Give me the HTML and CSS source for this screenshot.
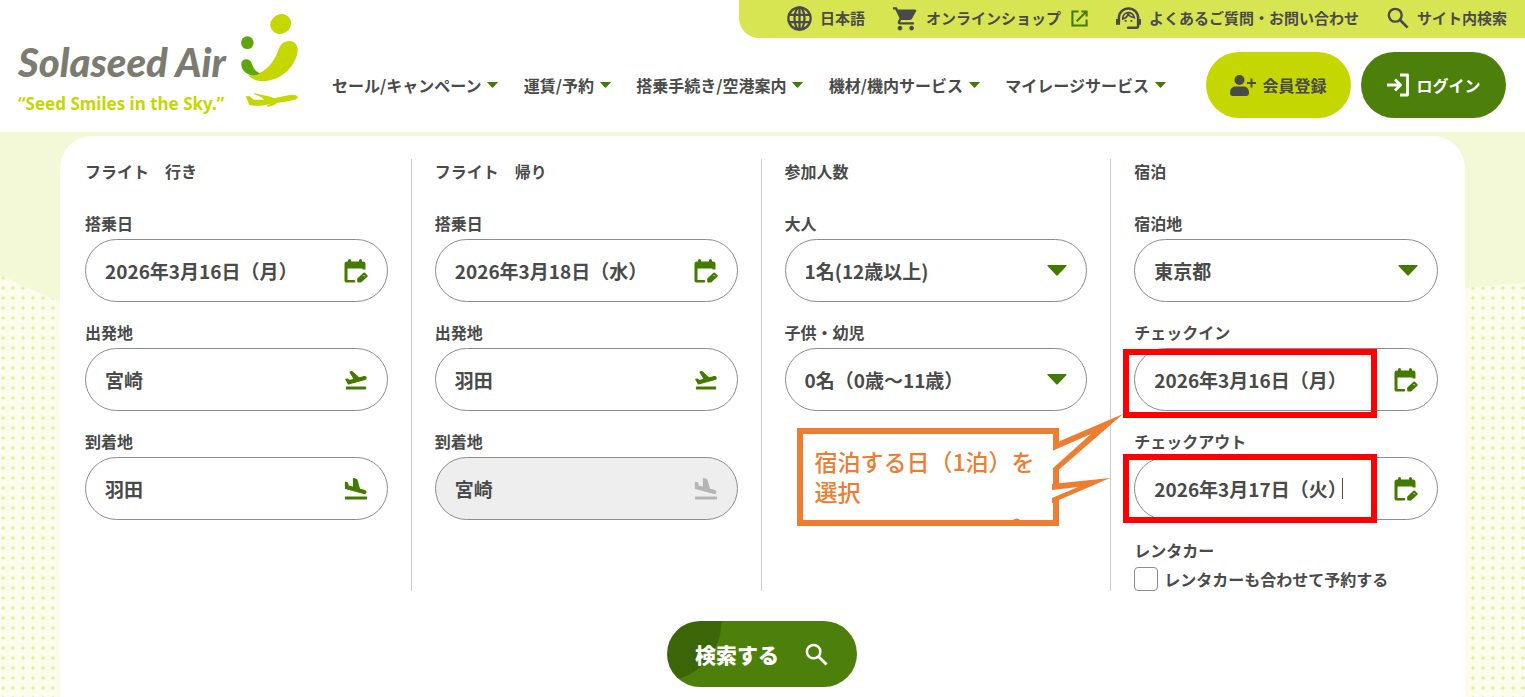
FILE: index.html
```
<!DOCTYPE html>
<html lang="ja">
<head>
  <meta charset="UTF-8">
  <meta name="viewport" content="width=device-width, initial-scale=1">
  <title>Solaseed Air</title>
  <link rel="stylesheet" href="styles.css">
</head>
<body>

<!-- shared icons -->
<svg class="sprite" aria-hidden="true">
  <symbol id="search" viewBox="0 0 24 24">
    <circle cx="9" cy="9" r="7" fill="none" stroke="currentColor" stroke-width="2.6"/>
    <path d="M14 14L22.500 22.500" stroke="currentColor" stroke-width="3"/>
  </symbol>
  <symbol id="calendar" viewBox="0 0 24 24">
    <path d="M5.500 1.500v3M16.500 1.500v3" stroke="currentColor" stroke-width="3" stroke-linecap="round"/>
    <path d="M3 2.500h16a2.500 2.500 0 0 1 2.500 2.500V10.500l-3 0V9.500H3.500v11.500H10a1.200 1.200 0 0 1 0 2.600H3A2.500 2.500 0 0 1 .5 21V5A2.500 2.500 0 0 1 3 2.500z" fill="currentColor"/>
    <path d="M14.200 22.500v-2.500l6-5.500 2.500 2.500-6 5.500z" fill="currentColor" stroke="currentColor" stroke-width="2" stroke-linejoin="round"/>
    <path d="M19.500 16l1.300 1.300" stroke="#fff" stroke-width="1"/>
  </symbol>
  <symbol id="takeoff" viewBox="0 0 24 24">
    <path d="M2.500 19H21.500v2H2.500zM22.070 9.640c-.21-.8-1.040-1.280-1.840-1.060L14.920 10l-6.900-6.430-1.930.51 4.140 7.170-4.970 1.330-1.970-1.540-1.450.39 2.590 4.490L21 11.490c.81-.23 1.280-1.050 1.070-1.850z" fill="currentColor" stroke="currentColor" stroke-width="1.200" stroke-linejoin="round"/>
  </symbol>
  <symbol id="landing" viewBox="0 0 24 24">
    <path d="M1.500 20h21v2h-21zM20 16.500c.8.210 1.620-.26 1.840-1.060.21-.8-.26-1.620-1.060-1.840l-5.310-1.620-2.760-9.520L9.500 1.500v8.800L4.400 9l-.93-3.200-2-.6v6.300l18.530 5z" fill="currentColor" stroke="currentColor" stroke-width="1.200" stroke-linejoin="round"/>
  </symbol>
  <symbol id="down" viewBox="0 0 20 11">
    <path d="M1 0h18q1 0 .5 1L11 10q-1 1-2 0L.5 1Q0 0 1 0z" fill="currentColor"/>
  </symbol>
</svg>

<header class="header">
  <a class="logo" href="#">
    <span class="logo-text">
      <span class="logo-name">Solaseed Air</span>
      <span class="logo-copy">“Seed Smiles in the Sky.”</span>
    </span>
    <svg class="logo-mark" viewBox="714 36 186 294" aria-hidden="true">
      <g fill="#c4d700">
        <ellipse cx="842" cy="72" rx="32" ry="29" transform="rotate(-30 842 72)"/>
        <path d="M744 226C790 228 822 190 836 148C846 114 894 114 893 152C890 190 850 243 788 243C768 243 754 236 744 226z"/>
        <path d="M737 289L748 288L761 299L792 299C786 290 775 288 762 282L764 279C785 287 805 286 822 295C840 291 860 285 880 285C897 286 896 295 885 299C865 304 845 306 831 308C825 314 815 319 803 320L800 317L810 312C790 318 765 319 748 315Z"/>
      </g>
      <g fill="#5fa50d">
        <circle cx="742" cy="128" r="19"/>
        <path d="M724 193C724 173 752 173 756 192C760 207 770 216 780 220C770 227 758 227 748 224C732 217 724 207 724 193z"/>
      </g>
    </svg>
  </a>

  <div class="header-main">
    <ul class="utility">
      <li><a href="#">
        <svg class="icon-lg" viewBox="0 0 24 24" fill="none" stroke="currentColor" stroke-width="2.200"><circle cx="12" cy="12" r="10.700"/><ellipse cx="12" cy="12" rx="4.800" ry="10.700"/><path d="M2 8.500h20M2 15.500h20M12 1v22"/></svg>
        日本語</a></li>
      <li><a href="#">
        <svg class="icon-lg" viewBox="1 1 21.500 21.500" fill="currentColor"><path d="M7 18c-1.100 0-1.990.9-1.990 2S5.900 22 7 22s2-.9 2-2-.9-2-2-2zM1 2v2h2l3.600 7.590-1.350 2.450C4.520 15.370 5.480 17 7 17h12v-2H7.420a.25.25 0 0 1-.25-.25l.93-1.750h7.450c.75 0 1.410-.41 1.750-1.030l3.580-6.490A1 1 0 0 0 20 4H5.210l-.94-2zm16 16c-1.100 0-1.990.9-1.990 2s.89 2 1.990 2 2-.9 2-2-.9-2-2-2z"/></svg>
        オンラインショップ
        <svg class="icon-sm green" viewBox="0 0 18 18" fill="none" stroke="currentColor" stroke-width="2.200"><path d="M8 1.500H1.500v15h15V10M11 1.500h5.500V7M16 2L6 12"/></svg></a></li>
      <li><a href="#">
        <svg class="icon-lg" viewBox="0 0 26 24" fill="none" stroke="currentColor" stroke-width="2.600"><path d="M3 17v-5.500a10 10 0 0 1 20 0V19.500a2 2 0 0 1-2 2h-8.500" stroke-linecap="round"/><path d="M2 12.500v6M24 12.500v6" stroke-width="4"/><path d="M7 12.500C10 11.500 12 9.500 12.500 7.500c1.500 2 3.500 3.300 6.500 3.700C18 7.500 15.500 6 13 6c-3.500 0-6 2.500-6 6.500z" stroke-width="1.800"/><path d="M9 14.500h2M15 14.500h2" stroke-width="2"/></svg>
        よくあるご質問・お問い合わせ</a></li>
      <li><a href="#"><svg class="icon-md"><use href="#search"/></svg>サイト内検索</a></li>
    </ul>

    <div class="header-bottom">
      <nav class="nav">
        <a href="#">セール/キャンペーン<svg class="nav-caret"><use href="#down"/></svg></a>
        <a href="#">運賃/予約<svg class="nav-caret"><use href="#down"/></svg></a>
        <a href="#">搭乗手続き/空港案内<svg class="nav-caret"><use href="#down"/></svg></a>
        <a href="#">機材/機内サービス<svg class="nav-caret"><use href="#down"/></svg></a>
        <a href="#">マイレージサービス<svg class="nav-caret"><use href="#down"/></svg></a>
      </nav>
      <div class="account">
        <a class="btn btn-join" href="#">
          <svg viewBox="0 0 26 21" fill="currentColor"><circle cx="9.500" cy="5" r="5"/><path d="M0 18c0-4 2-6.500 6-6.500h7c4 0 6 2.500 6 6.500 0 2-1 3-3 3H3c-2 0-3-1-3-3zM20.500 3.500h2V7H26v2h-3.500v3.500h-2V9H17V7h3.500z"/></svg>
          会員登録</a>
        <a class="btn btn-login" href="#">
          <svg viewBox="0 0 24 24" fill="none" stroke="currentColor" stroke-width="2.800" stroke-linejoin="round"><path d="M1 12h13M9 6.500l5.500 5.500L9 17.500M14 2h7.500v20H14"/></svg>
          ログイン</a>
      </div>
    </div>
  </div>
</header>

<main class="hero">
  <form class="card">
    <div class="columns">
      <section class="column">
        <h2>フライト　行き</h2>
        <div class="field">
          <label for="go-date">搭乗日</label>
          <div class="box"><input type="text" id="go-date" value="2026年3月16日（月）"><svg class="box-icon"><use href="#calendar"/></svg></div>
        </div>
        <div class="field">
          <label for="go-from">出発地</label>
          <div class="box"><input type="text" id="go-from" value="宮崎"><svg class="box-icon"><use href="#takeoff"/></svg></div>
        </div>
        <div class="field">
          <label for="go-to">到着地</label>
          <div class="box"><input type="text" id="go-to" value="羽田"><svg class="box-icon"><use href="#landing"/></svg></div>
        </div>
      </section>

      <section class="column">
        <h2>フライト　帰り</h2>
        <div class="field">
          <label for="back-date">搭乗日</label>
          <div class="box"><input type="text" id="back-date" value="2026年3月18日（水）"><svg class="box-icon"><use href="#calendar"/></svg></div>
        </div>
        <div class="field">
          <label for="back-from">出発地</label>
          <div class="box"><input type="text" id="back-from" value="羽田"><svg class="box-icon"><use href="#takeoff"/></svg></div>
        </div>
        <div class="field">
          <label for="back-to">到着地</label>
          <div class="box disabled"><input type="text" id="back-to" value="宮崎" disabled><svg class="box-icon"><use href="#landing"/></svg></div>
        </div>
      </section>

      <section class="column">
        <h2>参加人数</h2>
        <div class="field">
          <label for="adult">大人</label>
          <div class="box"><select id="adult"><option>1名(12歳以上)</option></select><svg class="box-caret"><use href="#down"/></svg></div>
        </div>
        <div class="field">
          <label for="child">子供・幼児</label>
          <div class="box"><select id="child"><option>0名（0歳～11歳）</option></select><svg class="box-caret"><use href="#down"/></svg></div>
        </div>
        <div class="callout">
          <svg width="328" height="114" viewBox="0 0 328 114" aria-hidden="true">
            <path d="M3 17h256v92H3z" fill="#fff" stroke="#ed7d31" stroke-width="6"/>
            <path d="M256 30L326 0L257 60z" fill="#ed7d31"/>
            <path d="M255 37L294 20L255 55z" fill="#fff"/>
            <path d="M255 70L313 64L255 89z" fill="#ed7d31"/>
            <path d="M255 76L281 73L255 84z" fill="#fff"/>
            <path d="M216 106q4-3 7 0z" fill="#ed7d31"/>
          </svg>
          <p>宿泊する日（1泊）を<br>選択</p>
        </div>
      </section>

      <section class="column">
        <h2>宿泊</h2>
        <div class="field">
          <label for="area">宿泊地</label>
          <div class="box"><select id="area"><option>東京都</option></select><svg class="box-caret"><use href="#down"/></svg></div>
        </div>
        <div class="field">
          <label for="checkin">チェックイン</label>
          <div class="box"><input type="text" id="checkin" value="2026年3月16日（月）"><svg class="box-icon"><use href="#calendar"/></svg><span class="mark"></span></div>
        </div>
        <div class="field">
          <label for="checkout">チェックアウト</label>
          <div class="box"><input type="text" id="checkout" value="2026年3月17日（火）"><svg class="box-icon"><use href="#calendar"/></svg><span class="cursor"></span><span class="mark mark-out"></span></div>
        </div>
        <fieldset class="rentacar">
          <legend>レンタカー</legend>
          <label><input type="checkbox">レンタカーも合わせて予約する</label>
        </fieldset>
      </section>
    </div>

    <button class="submit" type="submit">検索する<svg><use href="#search"/></svg></button>
  </form>
</main>

</body>
</html>
```
FILE: styles.css
```
* {
  box-sizing: border-box;
}

body {
  margin: 0;
  min-height: 100vh;
  display: flex;
  flex-direction: column;
  color: #4a4a4a;
  background-color: #fff;
  font-family: "Noto Sans CJK JP", sans-serif;
  font-size: 16px;
  font-weight: bold;
  line-height: 24px;
}

a {
  color: inherit;
  text-decoration: none;
}

svg {
  flex: none;
}

.sprite {
  position: absolute;
  width: 0;
  height: 0;
}

/* header */

.header {
  display: flex;
  min-height: 132px;
}

.logo {
  flex: none;
  display: flex;
  gap: 10px;
  width: 332px;
  padding: 12px 0 0 18px;
}

.logo-text {
  display: flex;
  flex-direction: column;
  width: 210px;
  padding-top: 28px;
  white-space: nowrap;
}

.logo-name {
  color: #7b7b70;
  font-family: Lato, sans-serif;
  font-size: 40px;
  font-style: italic;
  font-weight: 900;
  line-height: 44px;
}

.logo-copy {
  color: #c4d700;
  font-family: "Noto Sans", sans-serif;
  font-size: 17px;
  line-height: 40px;
}

.logo-mark {
  width: 62px;
  height: 98px;
}

.header-main {
  flex: 1;
  display: flex;
  flex-direction: column;
}

.utility {
  align-self: flex-end;
  display: flex;
  gap: 28px;
  height: 38px;
  margin: 0;
  padding: 0 18px 2px 48px;
  border-bottom-left-radius: 20px;
  background-color: #d8e552;
  font-size: 15px;
  list-style: none;
}

.utility li,
.utility a {
  display: flex;
  align-items: center;
  gap: 8px;
  white-space: nowrap;
}

.icon-lg {
  width: 25px;
  height: 25px;
}

.icon-md {
  width: 22px;
  height: 22px;
}

.icon-sm {
  width: 17px;
  height: 17px;
  margin-left: 2px;
}

.green {
  color: #437a00;
}

.header-bottom {
  flex: 1;
  display: flex;
  align-items: center;
  gap: 40px;
  padding-right: 19px;
}

.nav {
  flex: 1;
  display: flex;
  justify-content: space-between;
  white-space: nowrap;
}

.nav a {
  display: flex;
  align-items: center;
  gap: 6px;
}

.nav-caret {
  width: 11px;
  height: 6px;
  color: #437a00;
}

.account {
  display: flex;
  gap: 10px;
}

.btn {
  display: flex;
  justify-content: center;
  align-items: center;
  gap: 6px;
  width: 145px;
  height: 66px;
  border-radius: 33px;
}

.btn-join {
  background-color: #c4d700;
}

.btn-join svg {
  width: 26px;
  height: 21px;
}

.btn-login {
  background-color: #4c800a;
  color: #fff;
}

.btn-login svg {
  width: 24px;
  height: 24px;
}

/* search form */

.hero {
  flex: 1;
  display: flex;
  position: relative;
  padding: 4px 60px 0;
  background-color: #fbfcec;
  background-image:
    radial-gradient(ellipse 3px 1px at 5px 5px, #e4ee9c 50%, transparent),
    radial-gradient(ellipse 1px 3px at 5px 5px, #e4ee9c 50%, transparent);
  background-size: 10px 10px;
  background-position: -2px 1px;
}

.hero::before {
  content: '';
  position: absolute;
  inset: 0;
  background-color: #f3f8d6;
  clip-path: polygon(0 0, 100% 0, 100% 151px, 98% 153px, 96% 156px, 50% 260px, 4% 170px, 2% 157px, 0 143px);
}

.card {
  flex: 1;
  min-width: 0;
  position: relative;
  display: flex;
  flex-direction: column;
  align-items: center;
  padding: 23px 4px 10px 2px;
  border-radius: 32px 32px 0 0;
  background-color: #fff;
}

.columns {
  display: grid;
  grid-template-columns: repeat(4, minmax(0, 1fr));
  width: 100%;
}

.column {
  position: relative;
  padding: 0 23px;
  border-right: 1px solid #ccc;
}

.column:last-child {
  border-right: none;
}

h2 {
  margin: 0 0 28px;
  font-size: 16px;
}

.field {
  display: flex;
  flex-direction: column;
  gap: 4px;
  margin-bottom: 18px;
}

.box {
  position: relative;
  display: flex;
  align-items: center;
  height: 63px;
  padding: 0 19px;
  border: 1px solid #8c8c8c;
  border-radius: 32px;
}

.box input,
.box select {
  flex: 1;
  min-width: 0;
  height: 100%;
  margin: 0;
  padding: 0;
  border: none;
  outline: none;
  appearance: none;
  background: none;
  color: #4a4a4a;
  font: inherit;
  font-size: 19px;
}

.box-icon {
  width: 24px;
  height: 24px;
  color: #437a00;
}

.box-caret {
  width: 20px;
  height: 11px;
  color: #437a00;
}

.disabled {
  background-color: #eee;
}

.disabled .box-icon {
  color: #b5b5b5;
}

.cursor {
  position: absolute;
  left: 207px;
  top: 20px;
  width: 1px;
  height: 21px;
  background-color: #4a4a4a;
}

.rentacar {
  margin: 0;
  padding: 0;
  border: none;
}

.rentacar legend {
  padding: 0;
}

.rentacar label {
  display: flex;
  align-items: center;
  gap: 6px;
  margin-top: 5px;
}

.rentacar input {
  appearance: none;
  width: 24px;
  height: 24px;
  margin: 0;
  border: 1px solid #8c8c8c;
  border-radius: 4px;
  background-color: #fff;
}

.submit {
  display: flex;
  justify-content: center;
  align-items: center;
  gap: 26px;
  width: 190px;
  height: 66px;
  margin-top: 30px;
  border: none;
  border-radius: 33px;
  background: radial-gradient(circle at -6px 0, #3a6607 60px, #4c800a 61px);
  color: #fff;
  font: inherit;
  font-size: 21px;
  font-weight: 900;
  cursor: pointer;
}

.submit svg {
  width: 23px;
  height: 23px;
}

/* notes over the form */

.mark {
  position: absolute;
  left: -12px;
  top: 0;
  width: 254px;
  height: 69px;
  border: 6px solid #f00;
}

.mark-out {
  top: -4px;
}

.callout {
  position: absolute;
  left: 35px;
  top: 255px;
  z-index: 1;
  color: #ed7d31;
}

.callout svg {
  display: block;
}

.callout p {
  position: absolute;
  left: 18px;
  top: 32px;
  margin: 0;
  font-size: 23px;
  font-weight: 500;
  line-height: 30px;
  white-space: nowrap;
}
```
